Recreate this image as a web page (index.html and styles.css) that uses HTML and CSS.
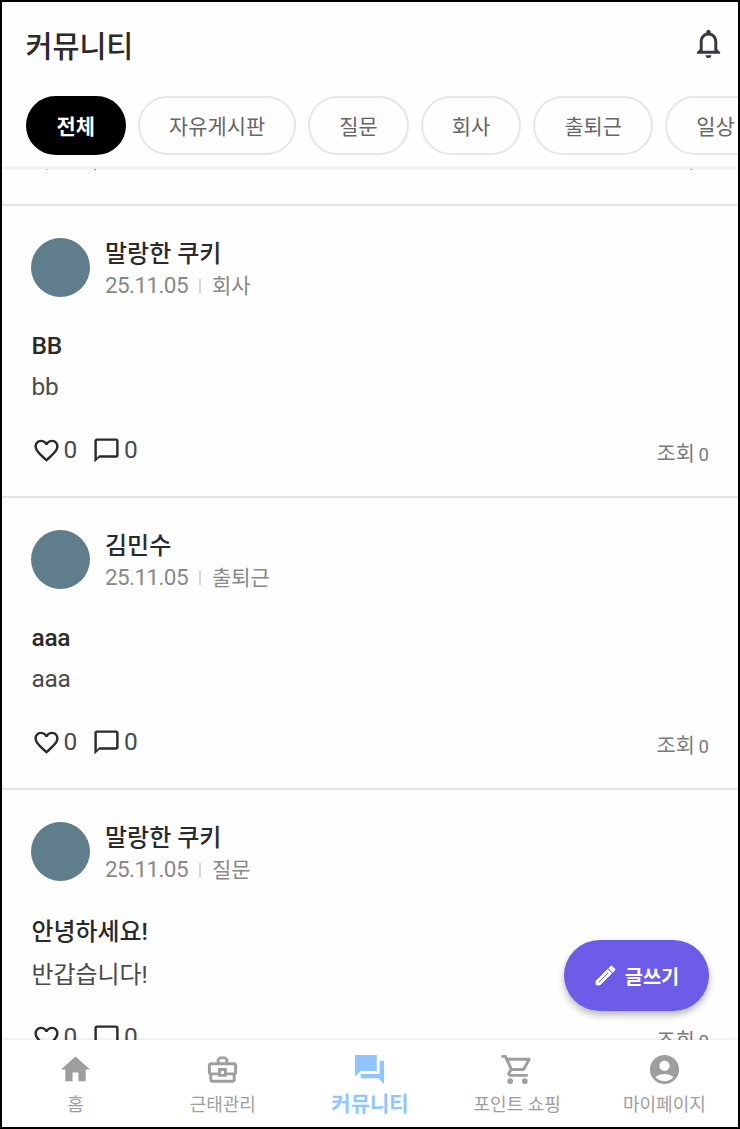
FILE: index.html
```html
<!DOCTYPE html>
<html lang="ko">
<head>
<meta charset="utf-8">
<title>커뮤니티</title>
<link rel="stylesheet" href="styles.css">
</head>
<body>
<svg class="defs" width="0" height="0">
  <symbol id="heart" viewBox="0 0 24 24"><path d="M16.5 3c-1.74 0-3.41.81-4.5 2.09C10.91 3.81 9.24 3 7.5 3 4.42 3 2 5.42 2 8.5c0 3.78 3.4 6.86 8.55 11.54L12 21.35l1.45-1.32C18.6 15.36 22 12.28 22 8.5 22 5.42 19.58 3 16.5 3zm-4.4 15.55l-.1.1-.1-.1C7.14 14.24 4 11.39 4 8.5 4 6.5 5.5 5 7.5 5c1.54 0 3.04.99 3.57 2.36h1.87C13.46 5.99 14.96 5 16.5 5c2 0 3.5 1.5 3.5 3.5 0 2.89-3.14 5.74-7.9 10.05z"/></symbol>
  <symbol id="bubble" viewBox="0 0 24 24"><path d="M20 2H4c-1.1 0-2 .9-2 2v18l4-4h14c1.1 0 2-.9 2-2V4c0-1.1-.9-2-2-2zm0 14H6l-2 2V4h16v12z"/></symbol>
</svg>
<div class="app">
  <header class="topbar">
    <h1 class="title">커뮤니티</h1>
    <svg class="bell" viewBox="0 0 24 24"><path d="M12 22c1.1 0 2-.9 2-2h-4c0 1.1.89 2 2 2zm6-6v-5c0-3.07-1.64-5.64-4.5-6.32V4c0-.83-.67-1.5-1.5-1.5s-1.5.67-1.5 1.5v.68C7.63 5.36 6 7.92 6 11v5l-2 2v1h16v-1l-2-2zm-2 1H8v-6c0-2.48 1.51-4.5 4-4.5s4 2.02 4 4.5v6z"/></svg>
  </header>
  <div class="chips">
    <span class="chip active">전체</span>
    <span class="chip">자유게시판</span>
    <span class="chip">질문</span>
    <span class="chip">회사</span>
    <span class="chip">출퇴근</span>
    <span class="chip">일상</span>
  </div>
  <main class="feed">
    <article class="post scrolled">
      <div class="actions">
        <svg class="icon"><use href="#heart"/></svg><span class="count">0</span>
        <svg class="icon second"><use href="#bubble"/></svg><span class="count">0</span>
        <span class="views">조회 <span class="views-n">0</span></span>
      </div>
    </article>
    <article class="post">
      <div class="author">
        <div class="avatar"></div>
        <div class="who">
          <div class="name">말랑한 쿠키</div>
          <div class="meta"><span class="date">25.11.05</span><i class="bar"></i><span class="cat">회사</span></div>
        </div>
      </div>
      <h2 class="subject">BB</h2>
      <p class="body">bb</p>
      <div class="actions">
        <svg class="icon"><use href="#heart"/></svg><span class="count">0</span>
        <svg class="icon second"><use href="#bubble"/></svg><span class="count">0</span>
        <span class="views">조회 <span class="views-n">0</span></span>
      </div>
    </article>
    <article class="post">
      <div class="author">
        <div class="avatar"></div>
        <div class="who">
          <div class="name">김민수</div>
          <div class="meta"><span class="date">25.11.05</span><i class="bar"></i><span class="cat">출퇴근</span></div>
        </div>
      </div>
      <h2 class="subject">aaa</h2>
      <p class="body">aaa</p>
      <div class="actions">
        <svg class="icon"><use href="#heart"/></svg><span class="count">0</span>
        <svg class="icon second"><use href="#bubble"/></svg><span class="count">0</span>
        <span class="views">조회 <span class="views-n">0</span></span>
      </div>
    </article>
    <article class="post hangul">
      <div class="author">
        <div class="avatar"></div>
        <div class="who">
          <div class="name">말랑한 쿠키</div>
          <div class="meta"><span class="date">25.11.05</span><i class="bar"></i><span class="cat">질문</span></div>
        </div>
      </div>
      <h2 class="subject">안녕하세요!</h2>
      <p class="body">반갑습니다!</p>
      <div class="actions">
        <svg class="icon"><use href="#heart"/></svg><span class="count">0</span>
        <svg class="icon second"><use href="#bubble"/></svg><span class="count">0</span>
        <span class="views">조회 <span class="views-n">0</span></span>
      </div>
    </article>
  </main>
  <button class="fab">
    <svg class="pencil" viewBox="0 0 24 24"><path d="M14.06 9.02l.92.92L5.92 19H5v-.92l9.06-9.06M17.66 3c-.25 0-.51.1-.7.29l-1.83 1.83 3.75 3.75 1.83-1.83c.39-.39.39-1.02 0-1.41l-2.34-2.34c-.2-.2-.45-.29-.71-.29zm-3.6 3.19L3 17.25V21h3.75L17.81 9.94l-3.75-3.75z"/></svg>
    <span class="fab-label">글쓰기</span>
  </button>
  <nav class="tabs">
    <div class="tab"><svg class="tab-icon" viewBox="0 0 24 24"><path d="M10 20v-6h4v6h5v-8h3L12 3 2 12h3v8z"/></svg><span>홈</span></div>
    <div class="tab"><svg class="tab-icon" viewBox="0 0 24 24"><path d="M20 7h-4V5l-2-2h-4L8 5v2H4c-1.1 0-2 .9-2 2v5c0 .75.4 1.38 1 1.73V19c0 1.11.89 2 2 2h14c1.11 0 2-.89 2-2v-3.28c.59-.35 1-.99 1-1.72V9c0-1.1-.9-2-2-2zM10 5h4v2h-4V5zM4 9h16v5h-5v-3H9v3H4V9zm9 6h-2v-2h2v2zm6 4H5v-3h4v1h6v-1h4v3z"/></svg><span>근태관리</span></div>
    <div class="tab on"><svg class="tab-icon" viewBox="0 0 24 24"><path d="M22 6h-3v9H6v3h12l4 4V6zm-5 7V2H2v15l4-4h11z"/></svg><span>커뮤니티</span></div>
    <div class="tab"><svg class="tab-icon" viewBox="0 0 24 24"><path d="M15.55 13c.75 0 1.41-.41 1.75-1.03l3.58-6.49c.37-.66-.11-1.48-.87-1.48H5.21l-.94-2H1v2h2l3.6 7.59-1.35 2.44C4.52 15.37 5.48 17 7 17h12v-2H7l1.1-2h7.45zM6.16 6h12.15l-2.76 5H8.53L6.16 6zM7 18c-1.1 0-1.99.9-1.99 2S5.9 22 7 22s2-.9 2-2-.9-2-2-2zm10 0c-1.1 0-1.99.9-1.99 2s.89 2 1.99 2 2-.9 2-2-.9-2-2-2z"/></svg><span>포인트 쇼핑</span></div>
    <div class="tab"><svg class="tab-icon" viewBox="0 0 24 24"><path d="M12 2C6.48 2 2 6.48 2 12s4.48 10 10 10 10-4.48 10-10S17.52 2 12 2zm0 4c1.93 0 3.5 1.57 3.5 3.5S13.93 13 12 13s-3.5-1.57-3.5-3.5S10.07 6 12 6zm0 14c-2.03 0-4.43-.82-6.14-2.88C7.55 15.8 9.68 15 12 15s4.45.8 6.14 2.12C16.43 19.18 14.03 20 12 20z"/></svg><span>마이페이지</span></div>
  </nav>
</div>
</body>
</html>
```
FILE: styles.css
```css
* { box-sizing: border-box; }
body {
  margin: 0;
  font-family: Roboto, "Noto Sans CJK KR", sans-serif;
  background: #fff;
}
svg { display: block; fill: currentColor; flex: none; }
.defs { position: absolute; }
.app {
  position: relative;
  width: 740px;
  height: 1129px;
  border: 2px solid #000;
  background: #fefefe;
  display: flex;
  flex-direction: column;
  overflow: hidden;
}
.topbar {
  height: 94px;
  flex: none;
  padding: 0 12px 12px 23.5px;
  display: flex;
  align-items: center;
  justify-content: space-between;
}
.title { margin: 7px 0 0; font-size: 29.3px; font-weight: 500; line-height: 40px; color: #2a2a2a; }
.bell { width: 35px; height: 35px; color: #3a3743; }
.chips {
  height: 72.5px;
  flex: none;
  display: flex;
  gap: 12px;
  padding-left: 23.5px;
  border-bottom: 2px solid #f0f0f0;
  overflow: hidden;
}
.chip {
  flex: none;
  height: 59px;
  padding: 1px 29.05px 0;
  border: 2px solid #e6e6e6;
  border-radius: 30px;
  font-size: 20.9px;
  line-height: 57px;
  color: #666;
  white-space: nowrap;
}
.chip.active { background: #000; border-color: #000; color: #fff; font-weight: 700; }
.feed { flex: 1; min-height: 0; overflow: hidden; }
.post { height: 292.2px; padding: 32px 29px 0; border-bottom: 2px solid #e4e4e4; }
.post.scrolled { height: 76px; margin-top: -39px; padding-top: 13.5px; }
.author { display: flex; gap: 15px; height: 59px; }
.avatar { width: 59px; height: 59px; border-radius: 50%; background: #607d8b; }
.name { font-size: 24px; font-weight: 500; line-height: 32px; color: #2a2a2a; }
.meta { display: flex; align-items: center; font-size: 21px; line-height: 32px; color: #888; }
.date { font-size: 22.5px; letter-spacing: -.6px; padding-bottom: 1px; line-height: 31px; }
.bar { width: 2px; height: 14px; background: #d6d6d6; margin: 0 11px 0 11px; }
.subject { margin: 33px 0 0 .5px; font-size: 24.5px; letter-spacing: -.3px; font-weight: 500; line-height: 32px; color: #2a2a2a; }
.body { margin: 9px 0 0 .5px; font-size: 24.5px; letter-spacing: -.3px; line-height: 32px; color: #4a4a4a; }
.hangul .subject { margin-top: 35px; font-size: 23.9px; letter-spacing: 0; }
.hangul .body { margin-top: 11px; font-size: 23.9px; letter-spacing: 0; }
.actions { display: flex; align-items: center; margin-top: 33px; height: 30px; color: #2a2a2a; padding-left: .5px; }
.post.scrolled .actions { margin-top: 0; }
.hangul .actions { margin-top: 32px; }
.icon { width: 29px; height: 29px; }
.icon.second { margin-left: 15px; }
.count { margin-left: 3px; font-size: 24.5px; letter-spacing: -.3px; line-height: 28px; padding-bottom: 2px; color: #4a4a4a; }
.views { margin: 7px 0 0 auto; font-size: 20.8px; line-height: 30px; color: #7a7a7a; word-spacing: -1.5px; }
.views-n { font-size: 18.6px; }
.fab {
  position: absolute;
  right: 29px;
  bottom: 116px;
  width: 145px;
  height: 71px;
  padding: 0 1px 0 0;
  border: 0;
  border-radius: 36px;
  background: #6c5ce7;
  box-shadow: 0 4px 7px rgba(0, 0, 0, .28);
  color: #fff;
  font: 700 19.8px/30px Roboto, "Noto Sans CJK KR", sans-serif;
  display: flex;
  align-items: center;
  justify-content: center;
  gap: 7px;
}
.fab-label { padding-top: 5px; }
.pencil { width: 25px; height: 25px; stroke: currentColor; stroke-width: .9; }
.tabs {
  flex: none;
  height: 87px;
  display: grid;
  grid-template-columns: repeat(5, 1fr);
  background: #fff;
  box-shadow: 0 -1px 3px rgba(0, 0, 0, .1);
}
.tab {
  display: flex;
  flex-direction: column;
  align-items: center;
  padding-top: 12px;
  gap: 2px;
  font-size: 18px;
  line-height: 32px;
  color: #9e9e9e;
  white-space: nowrap;
}
.tab-icon { width: 35px; height: 35px; }
.tab.on { color: #90c5ff; font-size: 21px; font-weight: 700; gap: 1px; }
```
